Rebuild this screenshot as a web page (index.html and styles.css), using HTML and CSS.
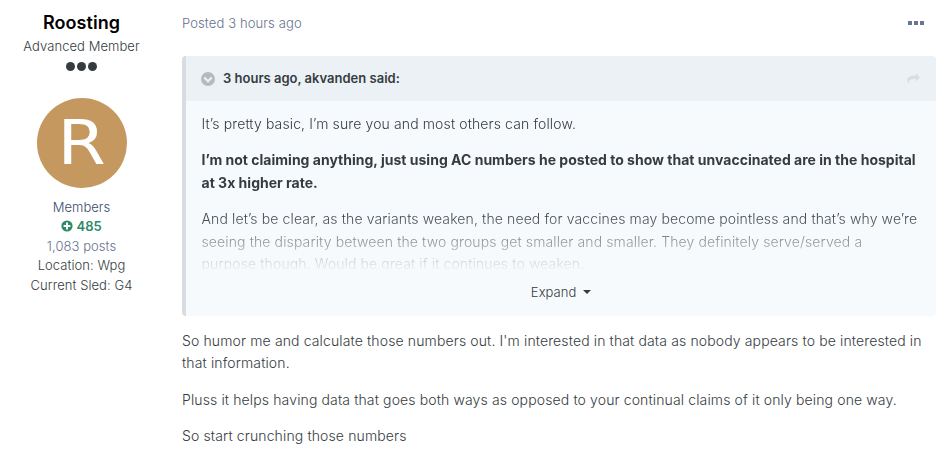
FILE: index.html
```html
<!DOCTYPE html>
<html lang="en">
<head>
    <meta charset="UTF-8">
    <meta name="viewport" content="width=device-width, initial-scale=1.0">
    <title>Forum post</title>
    <link rel="stylesheet" href="styles.css">
</head>
<body>
    <article class="post">
        <aside class="author">
            <h3 class="author-name">Roosting</h3>
            <div class="author-title">Advanced Member</div>
            <div class="pips"><span></span><span></span><span></span></div>
            <div class="avatar"><span>R</span></div>
            <ul class="author-info">
                <li class="group">Members</li>
                <li class="reputation">
                    <svg width="12" height="12" viewBox="0 0 12 12"><circle cx="6" cy="6" r="5.6" fill="#2b8a68"/><path d="M6 2.600v6.800M2.600 6h6.800" stroke="#fff" stroke-width="2"/></svg>
                    485
                </li>
                <li class="posts">1,083 posts</li>
                <li>Location: Wpg</li>
                <li>Current Sled: G4</li>
            </ul>
        </aside>
        <div class="content">
            <div class="meta">
                <span>Posted 3 hours ago</span>
                <span class="more"><i></i><i></i><i></i></span>
            </div>
            <blockquote class="quote">
                <div class="quote-header">
                    <svg class="toggle" width="14" height="14" viewBox="0 0 14 14"><circle cx="7" cy="7" r="7" fill="#b6babd"/><path d="M3.300 5.500L7 9.200l3.700-3.700" fill="none" stroke="#ecf1f6" stroke-width="2.200"/></svg>
                    <span>3 hours ago, akvanden said:</span>
                    <svg class="share" width="13" height="12" viewBox="0 0 13 12"><path d="M9 0l4 4.200L9 8.400V6C4.500 5.800 1.500 6.500 1.500 11C-.8 7 -.3 2.300 9 2.500z" fill="#d9dee2"/></svg>
                </div>
                <div class="quote-body">
                    <p>It’s pretty basic, I’m sure you and most others can follow.</p>
                    <p><strong>I’m not claiming anything, just using AC numbers he posted to show that unvaccinated are in the hospital at 3x higher rate.</strong></p>
                    <p>And let’s be clear, as the variants weaken, the need for vaccines may become pointless and that’s why we’re seeing the disparity between the two groups get smaller and smaller. They definitely serve/served a purpose though. Would be great if it continues to weaken.</p>
                </div>
                <div class="expand">Expand <span class="caret"></span></div>
            </blockquote>
            <div class="message">
                <p>So humor me and calculate those numbers out. I'm interested in that data as nobody appears to be interested in that information.</p>
                <p>Pluss it helps having data that goes both ways as opposed to your continual claims of it only being one way.</p>
                <p>So start crunching those numbers</p>
            </div>
        </div>
    </article>
</body>
</html>
```
FILE: styles.css
```css
* {
    box-sizing: border-box;
}

body {
    margin: 0;
    background: #fff;
    color: #353c41;
    font-family: Inter, "Liberation Sans", sans-serif;
    font-size: 14px;
    font-weight: 350;
    letter-spacing: 0.12px;
    line-height: 22.4px;
}

.post {
    display: flex;
    height: 466px;
    overflow: hidden;
}

.author {
    width: 163px;
    flex: none;
    padding-top: 12px;
    text-align: center;
    font-size: 13px;
    letter-spacing: 0.06px;
    line-height: 19.5px;
}

.author-name {
    margin: 0;
    font-size: 18px;
    font-weight: 600;
    line-height: 22px;
    color: #000;
}

.author-title {
    margin-top: 3px;
}

.pips {
    display: flex;
    justify-content: center;
    gap: 2px;
    margin-top: 5px;
}

.pips span {
    width: 9px;
    height: 9px;
    border-radius: 50%;
    background: #353c41;
}

.avatar {
    width: 90px;
    height: 90px;
    margin: 27px auto 0 37px;
    border-radius: 50%;
    background: #c4985f;
    color: #fff;
    font-family: "DejaVu Sans", sans-serif;
    font-size: 62px;
    font-weight: 400;
    line-height: 90px;
}

.avatar span {
    display: inline-block;
    transform: scaleX(1.12);
}

.author-info {
    margin: 10px 0 0;
    padding: 0;
    list-style: none;
}

.group {
    color: #3d4a6b;
}

.reputation {
    color: #2b8a68;
    font-weight: 600;
}

.reputation svg {
    vertical-align: -1px;
}

.posts {
    color: #68718f;
}

.content {
    flex: 1;
    padding: 12px 12px 0 19px;
}

.meta {
    display: flex;
    justify-content: space-between;
    align-items: center;
    height: 22px;
    color: #68718f;
    font-size: 13px;
}

.more {
    display: flex;
    gap: 2px;
    margin-right: 12px;
}

.more i {
    width: 4px;
    height: 4px;
    background: #68759a;
}

.quote {
    height: 260px;
    margin: 22px 0 0;
    border-left: 4px solid #d6dce1;
    border-radius: 4px;
    background: #f7fafd;
    overflow: hidden;
}

.quote-header {
    display: flex;
    align-items: center;
    height: 45px;
    padding: 0 16px 0 15px;
    background: #ecf1f5;
    font-size: 13px;
    font-weight: 600;
    letter-spacing: 0;
}

.toggle {
    margin-right: 8px;
}

.share {
    margin-left: auto;
}

.quote-body {
    height: 169px;
    padding: 12px 18px 0 15.5px;
    overflow: hidden;
    -webkit-mask-image: linear-gradient(#000 112px, transparent 172px);
    mask-image: linear-gradient(#000 112px, transparent 172px);
}

p {
    margin: 0 0 14px;
}

strong {
    font-weight: 700;
    letter-spacing: 0.01px;
}

.expand {
    height: 46px;
    padding-top: 11px;
    text-align: center;
    font-size: 13px;
    letter-spacing: 0.06px;
}

.caret {
    display: inline-block;
    margin: 0 0 3px 3px;
    border: 4px solid transparent;
    border-top-color: #353c41;
    border-bottom: 0;
}

.message {
    margin-top: 14px;
    letter-spacing: 0.13px;
}
```
